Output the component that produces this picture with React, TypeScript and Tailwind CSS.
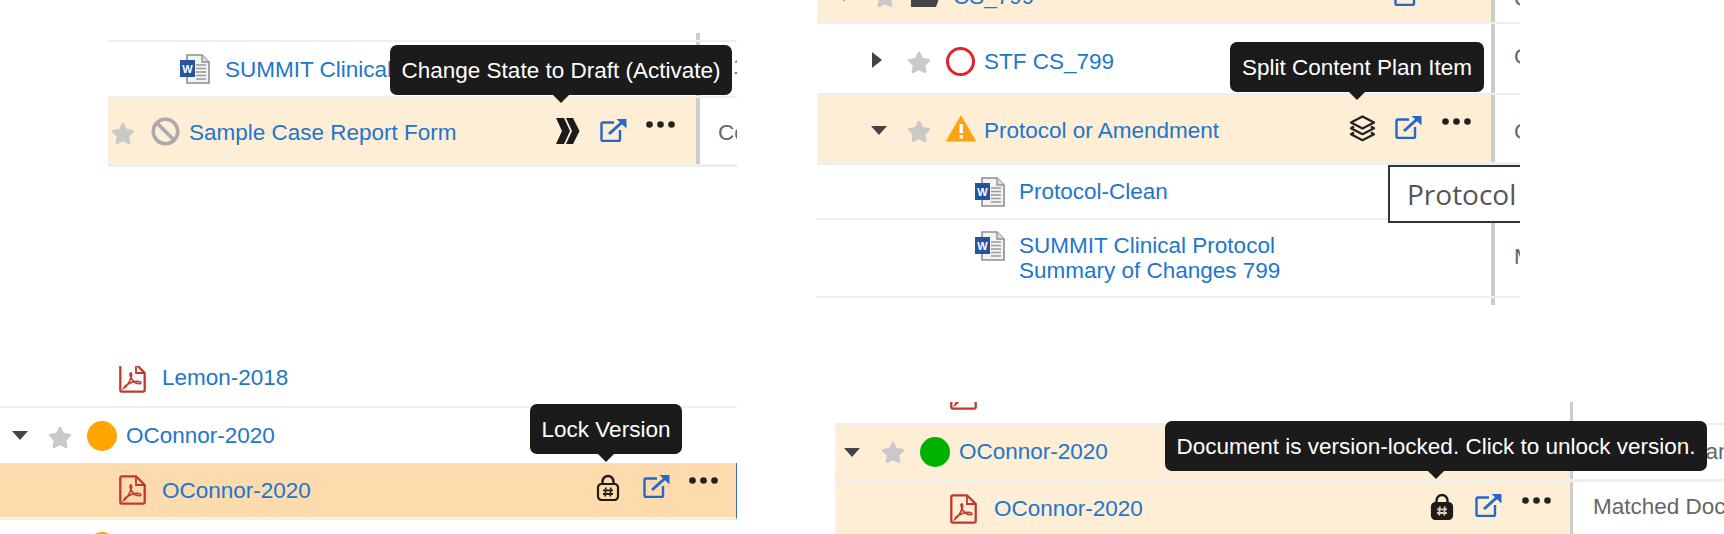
import type { ReactNode } from "react"
import { FaBan, FaStar } from "react-icons/fa"

function Tip({ className, children }: { className: string; children: ReactNode }) {
  return (
    <div className={`absolute z-10 flex h-[50px] items-center justify-center whitespace-nowrap rounded-[7px] bg-[#1b1b1b] text-white ${className}`}>
      {children}
      <span className="absolute -bottom-2 left-1/2 -ml-2 border-x-8 border-t-8 border-x-transparent border-t-[#1b1b1b]" />
    </div>
  )
}

function Link({ className = "", children }: { className?: string; children: ReactNode }) {
  return <span className={`whitespace-nowrap text-[#2176cc] ${className}`}>{children}</span>
}

function Star({ className = "" }: { className?: string }) {
  return <FaStar className={`h-[23px] w-[24px] shrink-0 text-[#c9c9c9] ${className}`} />
}

function CaretDown({ className = "" }: { className?: string }) {
  return (
    <svg viewBox="0 0 16 9" className={`h-[9px] w-[16px] shrink-0 ${className}`}>
      <path d="M0 0h16L8 9z" fill="#444" />
    </svg>
  )
}

function CaretRight({ className = "" }: { className?: string }) {
  return (
    <svg viewBox="0 0 10 16" className={`h-[16px] w-[10px] shrink-0 ${className}`}>
      <path d="M0 0l10 8-10 8z" fill="#444" />
    </svg>
  )
}

function External({ className = "" }: { className?: string }) {
  return (
    <svg viewBox="0 0 27 24" fill="none" stroke="#2468c8" className={`h-[24px] w-[27px] shrink-0 ${className}`}>
      <path d="M14 4.500H3a1.500 1.500 0 0 0-1.500 1.500v15.500A1.500 1.500 0 0 0 3 23h15.500a1.500 1.500 0 0 0 1.500-1.500V12" strokeWidth="2.400" />
      <path d="M9 16L24 2.500" strokeWidth="3" />
      <path d="M16.500 1H26.500V10.500z" fill="#2468c8" stroke="none" />
    </svg>
  )
}

function Dots({ className = "" }: { className?: string }) {
  return (
    <svg viewBox="0 0 29 7" className={`h-[7px] w-[29px] shrink-0 ${className}`}>
      <circle cx="3.500" cy="3.500" r="3.300" fill="#222" />
      <circle cx="14.500" cy="3.500" r="3.300" fill="#222" />
      <circle cx="25.500" cy="3.500" r="3.300" fill="#222" />
    </svg>
  )
}

function Chevrons() {
  return (
    <svg viewBox="0 0 25 26" className="h-[26px] w-[25px] shrink-0">
      <path d="M1 0h8l6 13-6 13H1l6-13z" fill="#1b1b1b" />
      <path d="M11 0h7l6.500 13L18 26h-7l6-13z" fill="#1b1b1b" />
    </svg>
  )
}

function Layers() {
  return (
    <svg viewBox="0 0 27 27" fill="none" stroke="#222" strokeWidth="2.300" strokeLinejoin="round" className="h-[27px] w-[27px] shrink-0">
      <path d="M13.500 1.500L25 7.500l-11.500 6L2 7.500z" />
      <path d="M5 11.500l-3 1.700 11.500 6 11.500-6-3-1.700" />
      <path d="M5 17.500l-3 1.700 11.500 6 11.500-6-3-1.700" />
    </svg>
  )
}

function Lock({ solid = false }: { solid?: boolean }) {
  const ink = solid ? "#d8cbb8" : "#2b2620"
  return (
    <svg viewBox="0 0 24 27" fill="none" className="h-[27px] w-[24px] shrink-0">
      <path d="M6.500 11V7.500a5.500 5.500 0 0 1 11 0V11" stroke="#1f1c18" strokeWidth="2.400" />
      <rect x="2" y="10" width="20" height="16" rx="3.500" fill={solid ? "#1f1c18" : "none"} stroke="#1f1c18" strokeWidth="2.200" />
      <path d="M9.800 13.500l-.6 9M14.800 13.500l-.6 9M7 16.400h10M7 20h10" stroke={ink} strokeWidth="1.800" />
    </svg>
  )
}

function WordIcon({ className = "" }: { className?: string }) {
  return (
    <svg viewBox="0 0 31 30" className={`h-[30px] w-[31px] shrink-0 ${className}`}>
      <path d="M7 1h15l7 7v21H7z" fill="#f3f3f3" stroke="#8e8e8e" strokeWidth="1.600" />
      <path d="M22 1v7h7" fill="#ddd" stroke="#8e8e8e" strokeWidth="1.300" />
      <path d="M16 11h10M16 14.500h10M16 18h10M16 21.500h10M16 25h10" stroke="#9a9a9a" strokeWidth="1.500" />
      <rect x="0" y="6" width="15" height="17" fill="#26539f" />
      <text x="7.500" y="18.500" textAnchor="middle" fontSize="11" fontWeight="700" fill="#fff" fontFamily="Liberation Sans, sans-serif">W</text>
    </svg>
  )
}

function PdfIcon({ className = "" }: { className?: string }) {
  return (
    <svg viewBox="0 0 27 30" fill="none" stroke="#c0392b" className={`h-[30px] w-[27px] shrink-0 ${className}`}>
      <path d="M2.500 1.300H17L25.700 10v17.200a1.500 1.500 0 0 1-1.500 1.500H2.500A1.500 1.500 0 0 1 1.300 27.200V2.800A1.500 1.500 0 0 1 2.500 1.300z" strokeWidth="2.300" />
      <path d="M17 1.500V10h8.500" strokeWidth="1.800" />
      <path d="M5 25c3-2 6-7 7.500-12 .5-2-.2-3.500-1-3-1 .8-.3 3.500 1.500 6.500 2 2.800 5 4.500 8 4.200 1.500-.4 1-2-1-2.200-4-.5-9 1-14 4.500z" strokeWidth="1.600" />
    </svg>
  )
}

export default function App() {
  return (
    <div className="relative h-[534px] w-[1724px] overflow-hidden bg-white font-['Liberation_Sans',Arial,sans-serif] text-[22.500px] leading-[25px]">
      {/* top left crop */}
      <section className="absolute left-[108px] top-[33px] w-[629px] overflow-hidden">
        <div className="flex h-[7px]">
          <div className="w-[592px] shrink-0 border-r-4 border-[#ccc]" />
        </div>
        <div className="flex h-[58px] border-y-2 border-[#eee]">
          <div className="flex w-[592px] shrink-0 items-center border-r-4 border-[#ccc] pl-[72px]">
            <WordIcon />
            <Link className="ml-[14px]">SUMMIT Clinical Protocol</Link>
          </div>
          <div className="whitespace-nowrap pl-[33px] pt-[12px] text-[#666]">1</div>
        </div>
        <div className="flex h-[69px] border-b-[3px] border-[#eee]">
          <div className="flex w-[592px] shrink-0 items-center border-r-4 border-[#ccc] bg-[#ffeed6] pl-[3px]">
            <Star className="mt-[5px]" />
            <FaBan className="ml-[16px] h-[29px] w-[29px] shrink-0 text-[#aaa]" />
            <Link className="ml-[9px] mt-[2px]">Sample Case Report Form</Link>
            <div className="ml-auto flex items-start pr-[21px]">
              <Chevrons />
              <External className="ml-[20px]" />
              <Dots className="ml-[19px] mt-[3px]" />
            </div>
          </div>
          <div className="whitespace-nowrap pl-[18px] pt-[22px] text-[#666]">Content</div>
        </div>
        <Tip className="left-[282px] top-[12px] w-[342px]">Change State to Draft (Activate)</Tip>
      </section>

      {/* top right crop */}
      <section className="absolute left-[817px] top-0 h-[305px] w-[703px] overflow-hidden">
        <div className="flex h-[24px] overflow-hidden border-b-2 border-[#eee]">
          <div className="flex h-[22px] w-[678px] shrink-0 border-r-4 border-[#ccc] bg-[#ffeed6]">
            <div className="-mt-[37px] flex h-[66px] w-full items-center pl-[19px]">
              <CaretDown />
              <Star className="ml-[21px]" />
              <svg viewBox="0 0 30 22" className="ml-[14px] h-[22px] w-[30px] shrink-0">
                <path d="M0 3h10l3 3h14l3 2-5 14H0z" fill="#444" />
              </svg>
              <Link className="ml-[12px]">CS_799</Link>
              <External className="ml-auto mr-[70px] -mt-[4px]" />
            </div>
          </div>
          <div className="-mt-[14px] whitespace-nowrap pl-[19px] text-[#666]">Content</div>
        </div>
        <div className="flex h-[71px] border-b-2 border-[#eee]">
          <div className="flex w-[678px] shrink-0 items-center border-r-4 border-[#ccc] pl-[55px]">
            <CaretRight className="mt-[3px]" />
            <Star className="ml-[25px] mt-[8px]" />
            <span className="ml-[15px] mt-[5px] h-[29px] w-[29px] shrink-0 rounded-full border-[3px] border-[#e8202a]" />
            <Link className="ml-[9px] mt-[5px]">STF CS_799</Link>
          </div>
          <div className="whitespace-nowrap pl-[19px] pt-[20px] text-[#666]">Content</div>
        </div>
        <div className="flex h-[70px] border-b-[3px] border-[#eee]">
          <div className="flex w-[678px] shrink-0 items-center border-r-4 border-[#ccc] bg-[#ffeed6] pl-[54px]">
            <CaretDown className="mt-[3px]" />
            <Star className="ml-[20px] mt-[6px]" />
            <svg viewBox="0 0 30 27" className="-mt-[1px] ml-[15px] h-[27px] w-[30px] shrink-0">
              <path d="M15 1L29.500 26H.5z" fill="#fca311" stroke="#fca311" strokeLinejoin="round" />
              <rect x="13.500" y="9" width="3.500" height="9" fill="#fff" />
              <rect x="13.500" y="20" width="3.500" height="3.500" fill="#fff" />
            </svg>
            <Link className="ml-[8px] mt-[3px]">Protocol or Amendment</Link>
            <div className="ml-auto flex items-start pr-[20px]">
              <Layers />
              <External className="ml-[19px]" />
              <Dots className="ml-[20px] mt-[3px]" />
            </div>
          </div>
          <div className="whitespace-nowrap pl-[19px] pt-[24px] text-[#666]">Content</div>
        </div>
        <div className="flex h-[55px] border-b-2 border-[#eee]">
          <div className="flex w-[678px] shrink-0 items-center border-r-4 border-[#ccc] pl-[158px]">
            <WordIcon />
            <Link className="ml-[13px]">Protocol-Clean</Link>
          </div>
        </div>
        <div className="flex h-[78px] border-b-2 border-[#eee]">
          <div className="flex w-[678px] shrink-0 items-start border-r-4 border-[#ccc] pl-[158px] pt-[11px]">
            <WordIcon />
            <Link className="ml-[13px] mt-[2px] block">
              SUMMIT Clinical Protocol
              <br />
              Summary of Changes 799
            </Link>
          </div>
          <div className="whitespace-nowrap pl-[19px] pt-[24px] text-[#666]">Matched</div>
        </div>
        <div className="h-[7px] w-[678px] border-r-4 border-[#ccc]" />
        <Tip className="left-[413px] top-[42px] w-[254px]">Split Content Plan Item</Tip>
        <div className="absolute left-[571px] top-[165px] flex h-[58px] w-[220px] items-center whitespace-nowrap border-2 border-[#333] bg-white pl-[17px] font-['Open_Sans',sans-serif] text-[28px] text-[#555]">
          Protocol or Amendment
        </div>
      </section>

      {/* bottom left crop */}
      <section className="absolute left-0 top-[366px] h-[168px] w-[737px] overflow-hidden">
        <div className="flex h-[42px] items-start border-b-2 border-[#eee] pl-[119px]">
          <div className="h-[27px] w-[27px] overflow-hidden">
            <PdfIcon className="-mt-[3px]" />
          </div>
          <Link className="ml-[16px] -mt-[1px]">Lemon-2018</Link>
        </div>
        <div className="flex h-[55px] items-center pl-[12px]">
          <CaretDown />
          <Star className="ml-[20px] mt-[4px]" />
          <span className="ml-[15px] h-[30px] w-[30px] shrink-0 rounded-full bg-[#ffa500]" />
          <Link className="ml-[9px]">OConnor-2020</Link>
        </div>
        <div className="flex h-[57px] items-center border-b-[3px] border-r border-[#eee] border-r-[#3b6ea8] bg-[#fddbad] pl-[119px]">
          <PdfIcon />
          <Link className="ml-[16px]">OConnor-2020</Link>
          <div className="ml-auto flex items-start pb-[5px] pr-[18px]">
            <Lock />
            <External className="ml-[23px]" />
            <Dots className="ml-[19px] mt-[3px]" />
          </div>
        </div>
        <div className="pl-[87px] pt-[12px]">
          <span className="block h-[30px] w-[30px] rounded-full bg-[#ffa500]" />
        </div>
        <Tip className="left-[530px] top-[38px] w-[152px]">Lock Version</Tip>
      </section>

      {/* bottom right crop */}
      <section className="absolute left-[835px] top-[402px] h-[132px] w-[889px] overflow-hidden">
        <div className="flex h-[23px] border-b-2 border-[#eee]">
          <div className="w-[738px] shrink-0 border-r-[3px] border-[#ccc] pl-[115px]">
            <div className="h-[8px] overflow-hidden">
              <PdfIcon className="-mt-[22px]" />
            </div>
          </div>
        </div>
        <div className="flex h-[57px] border-b-[3px] border-[#eee]">
          <div className="flex w-[738px] shrink-0 items-center border-r-[3px] border-[#ccc] bg-[#ffeed6] pl-[9px]">
            <CaretDown className="w-[15px]" />
            <Star className="ml-[21px]" />
            <span className="ml-[15px] h-[30px] w-[30px] shrink-0 rounded-full bg-[#00b200]" />
            <Link className="ml-[9px] -mt-[2px]">OConnor-2020</Link>
          </div>
          <div className="whitespace-nowrap pl-[40px] pt-[14px] text-[#666]">Matched and</div>
        </div>
        <div className="flex h-[54px]">
          <div className="flex w-[738px] shrink-0 items-center border-r-[3px] border-[#ccc] bg-[#ffeed6] pl-[115px]">
            <PdfIcon />
            <Link className="ml-[17px] -mt-[2px]">OConnor-2020</Link>
            <div className="ml-auto flex items-start pb-[6px] pr-[19px]">
              <Lock solid />
              <External className="ml-[21px]" />
              <Dots className="ml-[20px] mt-[4px]" />
            </div>
          </div>
          <div className="whitespace-nowrap pl-[20px] pt-[12px] text-[#666]">Matched Document</div>
        </div>
        <Tip className="left-[330px] top-[19px] w-[542px]">Document is version-locked. Click to unlock version.</Tip>
      </section>
    </div>
  )
}
